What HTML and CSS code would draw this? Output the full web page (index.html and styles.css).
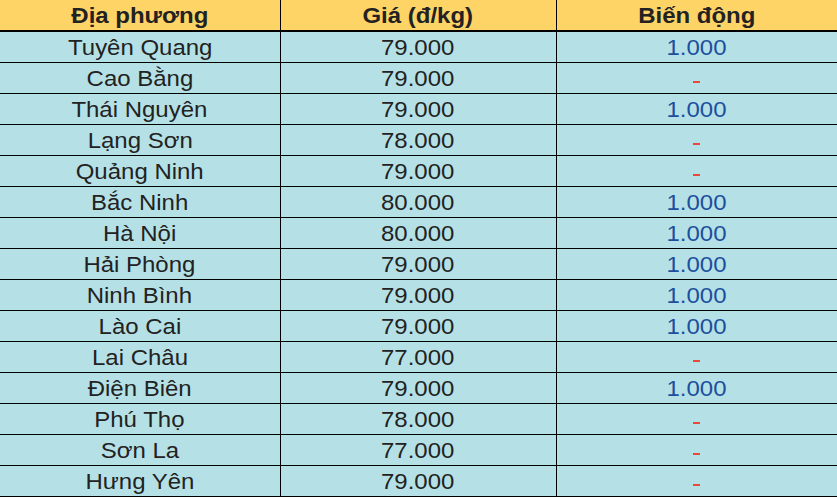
FILE: index.html
```html
<!DOCTYPE html>
<html lang="vi">
<head>
<meta charset="utf-8">
<link rel="stylesheet" href="styles.css">
</head>
<body>
<table class="price-table">
  <colgroup>
    <col class="c1"><col class="c2"><col class="c3">
  </colgroup>
  <thead>
    <tr><th><span class="t">Địa phương</span></th><th><span class="t">Giá (đ/kg)</span></th><th><span class="t">Biến động</span></th></tr>
  </thead>
  <tbody>
    <tr><td><span class="t">Tuyên Quang</span></td><td><span class="t">79.000</span></td><td class="up"><span class="t">1.000</span></td></tr>
    <tr><td><span class="t">Cao Bằng</span></td><td><span class="t">79.000</span></td><td class="flat"><span class="dash"></span></td></tr>
    <tr><td><span class="t">Thái Nguyên</span></td><td><span class="t">79.000</span></td><td class="up"><span class="t">1.000</span></td></tr>
    <tr><td><span class="t">Lạng Sơn</span></td><td><span class="t">78.000</span></td><td class="flat"><span class="dash"></span></td></tr>
    <tr><td><span class="t">Quảng Ninh</span></td><td><span class="t">79.000</span></td><td class="flat"><span class="dash"></span></td></tr>
    <tr><td><span class="t">Bắc Ninh</span></td><td><span class="t">80.000</span></td><td class="up"><span class="t">1.000</span></td></tr>
    <tr><td><span class="t">Hà Nội</span></td><td><span class="t">80.000</span></td><td class="up"><span class="t">1.000</span></td></tr>
    <tr><td><span class="t">Hải Phòng</span></td><td><span class="t">79.000</span></td><td class="up"><span class="t">1.000</span></td></tr>
    <tr><td><span class="t">Ninh Bình</span></td><td><span class="t">79.000</span></td><td class="up"><span class="t">1.000</span></td></tr>
    <tr><td><span class="t">Lào Cai</span></td><td><span class="t">79.000</span></td><td class="up"><span class="t">1.000</span></td></tr>
    <tr><td><span class="t">Lai Châu</span></td><td><span class="t">77.000</span></td><td class="flat"><span class="dash"></span></td></tr>
    <tr><td><span class="t">Điện Biên</span></td><td><span class="t">79.000</span></td><td class="up"><span class="t">1.000</span></td></tr>
    <tr><td><span class="t">Phú Thọ</span></td><td><span class="t">78.000</span></td><td class="flat"><span class="dash"></span></td></tr>
    <tr><td><span class="t">Sơn La</span></td><td><span class="t">77.000</span></td><td class="flat"><span class="dash"></span></td></tr>
    <tr><td><span class="t">Hưng Yên</span></td><td><span class="t">79.000</span></td><td class="flat"><span class="dash"></span></td></tr>
  </tbody>
</table>
</body>
</html>
```
FILE: styles.css
```css
html, body {
  margin: 0;
  padding: 0;
  background: #ffffff;
}
.price-table {
  border-collapse: collapse;
  table-layout: fixed;
  width: 837px;
  font-family: "Liberation Sans", Arial, sans-serif;
  font-size: 22px;
  color: #222222;
}
.c1 { width: 280px; }
.c2 { width: 276px; }
.c3 { width: 281px; }
.price-table th,
.price-table td {
  height: 29px;
  padding: 1px 0 0 0;
  text-align: center;
  vertical-align: middle;
  border-right: 1px solid #000000;
  border-bottom: 1px solid #000000;
  line-height: 29px;
  white-space: nowrap;
}
.price-table th {
  background: #ffd466;
  font-weight: bold;
  border-bottom: 2px solid #000000;
  height: 28px;
}
.price-table td {
  background: #b5e1e6;
}
.t {
  display: inline-block;
  transform: scaleX(1.09);
}
.up {
  color: #1c4f9e;
}
.dash {
  display: inline-block;
  width: 7px;
  height: 2px;
  background: #e84a3a;
  vertical-align: middle;
  position: relative;
  top: 2px;
}
```
